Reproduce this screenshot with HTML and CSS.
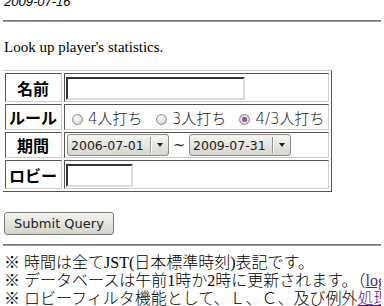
FILE: index.html
```html
<html>
<head>
  <link rel="stylesheet" href="styles.css">
</head>
<body>
  <p class="date">2009-07-16</p>
  <hr>
  <p class="intro">Look up player's statistics.</p>

  <form class="lookup">
    <table class="search" border="1" cellspacing="2">
      <tr class="row-name">
        <th>名前</th>
        <td><input type="text" class="field name"></td>
      </tr>
      <tr class="row-rule">
        <th>ルール</th>
        <td>
          <label class="opt"><input type="radio" name="rule">4人打ち</label>
          <label class="opt"><input type="radio" name="rule">3人打ち</label>
          <label class="opt"><input type="radio" name="rule" checked>4/3人打ち</label>
        </td>
      </tr>
      <tr class="row-term">
        <th>期間</th>
        <td>
          <span class="pick-wrap"><select class="pick"><option>2006-07-01</option></select></span>
          <span class="tilde">~</span>
          <span class="pick-wrap"><select class="pick"><option>2009-07-31</option></select></span>
        </td>
      </tr>
      <tr class="row-lobby">
        <th>ロビー</th>
        <td><input type="text" class="field lobby"></td>
      </tr>
    </table>
    <p class="actions"><input type="submit" class="submit" value="Submit Query"></p>
  </form>

  <hr>
  <ul class="notes">
    <li>※ 時間は全てJST(日本標準時刻)表記です。</li>
    <li>※ データベースは午前1時か2時に更新されます。（<a href="#">log</a>）</li>
    <li>※ ロビーフィルタ機能として、Ｌ、Ｃ、及び例外<a href="#">処理</a>を行います。</li>
  </ul>
</body>
</html>
```

FILE: styles.css
```css
html
{
  overflow: hidden;
}
body
{
  margin: 0 3px;
  font-family: "Liberation Serif", "Noto Sans CJK JP", serif;
  font-size: 16px;
  color: #000;
  background: #fff;
}
hr
{
  margin: 0;
  border: none;
  border-top: 1px solid #777;
  border-bottom: 1px solid #999;
}

.date
{
  margin: -6px 0 10px 1px;
  font-family: "Liberation Sans", sans-serif;
  font-style: italic;
  font-size: 13px;
  line-height: 16px;
}
.intro
{
  margin: 16px 0 14px 1px;
  font-size: 15px;
  line-height: 18px;
}
.lookup
{
  margin: 0;
}

.search
{
  border-collapse: separate;
  border-spacing: 2px;
  border: 1px solid;
  border-color: #ccc #555 #555 #ccc;
  margin-left: -1px;
}
.search th,
.search td
{
  border: 1px solid;
  border-color: #555 #ccc #ccc #555;
  padding: 0 2px 0 1px;
  white-space: nowrap;
}
.search th
{
  width: 52px;
  font-family: "Noto Sans CJK JP", sans-serif;
  font-weight: bold;
  font-size: 16px;
  text-align: center;
}
.search td
{
  width: 260px;
  font-family: "DejaVu Sans", "Noto Sans CJK JP", sans-serif;
  font-size: 13px;
  color: #222;
}
.row-name th, .row-name td { height: 29px; }
.row-rule th, .row-rule td { height: 25px; }
.row-term th, .row-term td { height: 26px; }
.row-lobby th, .row-lobby td { height: 29px; }

.field
{
  box-sizing: border-box;
  height: 23px;
  margin: 2px 0 0 0;
  border: 2px solid;
  border-color: #333 #ddd #ddd #333;
  background: #fff;
  vertical-align: middle;
}
.name { width: 179px; }
.lobby { width: 67px; }

.opt
{
  font-size: 15px;
  font-weight: 300;
  margin-right: 3px;
}
.opt:last-child { margin-right: 0; }
.opt input
{
  appearance: none;
  box-sizing: border-box;
  width: 11px;
  height: 11px;
  margin: 0 5px 0 6px;
  border: 1px solid #8a8a8a;
  border-radius: 50%;
  background: radial-gradient(circle at 40% 35%, #fff, #c8c8c8);
  vertical-align: -1px;
}
.opt input:checked
{
  background: radial-gradient(circle, #9a5aa8 0 2.5px, #e4e4e4 3px, #bdbdbd);
}

.pick-wrap
{
  position: relative;
  display: inline-block;
  vertical-align: middle;
  margin-left: 1px;
}
.pick
{
  appearance: none;
  box-sizing: border-box;
  width: 102px;
  height: 22px;
  padding: 0 0 0 3px;
  border: 1px solid #8b8b84;
  border-radius: 3px;
  background: linear-gradient(#f5f5f2, #d6d6cf);
  font-family: "DejaVu Sans", sans-serif;
  font-size: 12.5px;
  color: #1a1a1a;
}
.pick-wrap::before
{
  content: "";
  position: absolute;
  right: 17px;
  top: 3px;
  bottom: 3px;
  border-left: 1px solid #9a9a94;
  border-right: 1px solid #fff;
}
.pick-wrap::after
{
  content: "";
  position: absolute;
  right: 6px;
  top: 9px;
  border-left: 3px solid transparent;
  border-right: 3px solid transparent;
  border-top: 4px solid #222;
}
.tilde
{
  margin: 0 -1px 0 0;
  font-size: 14px;
  vertical-align: middle;
}

.actions
{
  display: flex;
  margin: 20px 0 9px 1px;
}
.submit
{
  height: 23px;
  width: 110px;
  padding: 0;
  border: 1px solid #7d7d77;
  border-radius: 3px;
  background: linear-gradient(#f3f3f0, #d4d4cd);
  font-family: "DejaVu Sans", sans-serif;
  font-size: 13px;
  color: #222;
}

.notes
{
  list-style: none;
  margin: 8px 0 0 1px;
  padding: 0;
  white-space: nowrap;
  font-size: 16px;
  line-height: 18px;
  font-weight: 300;
}
.notes a
{
  color: #551a8b;
}
```
